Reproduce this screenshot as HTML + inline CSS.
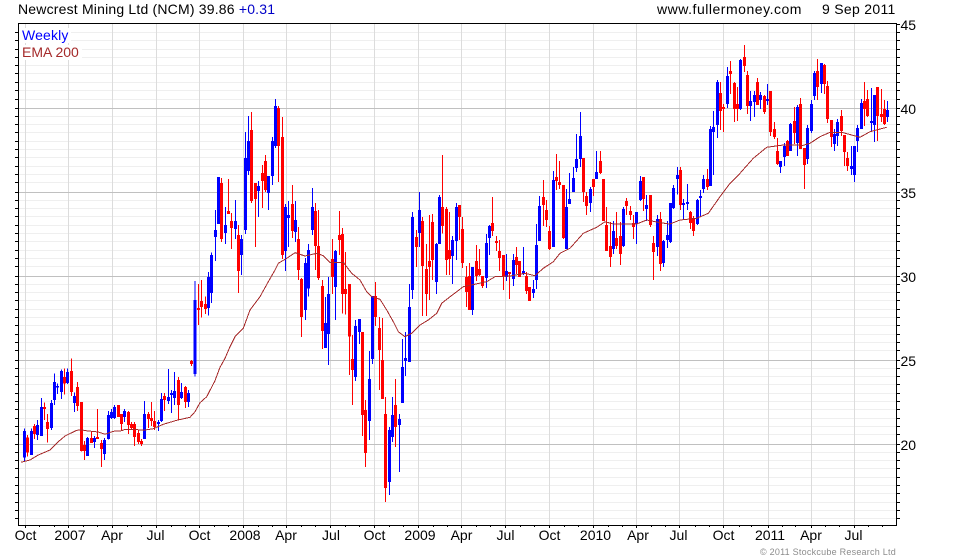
<!DOCTYPE html>
<html><head><meta charset="utf-8"><title>Newcrest Mining Ltd (NCM)</title>
<style>
html,body{margin:0;padding:0;background:#fff}
svg{display:block}
text{font-family:"Liberation Sans",Arial,sans-serif;font-size:14px;fill:#000}
.w,.t{fill:none}
.l{stroke-width:3;fill:none;shape-rendering:crispEdges}
.f{stroke-width:9;fill:none;shape-rendering:crispEdges}
.B{stroke:#0000ff}.R{stroke:#ff0000}
</style></head><body>
<svg width="980" height="560" viewBox="0 0 980 560" xmlns="http://www.w3.org/2000/svg">
<rect width="980" height="560" fill="#fff"/>
<g shape-rendering="crispEdges" fill="none">
<path stroke="#efefef" d="M18 32.5H897M18 40.5H897M18 49.5H897M18 57.5H897M18 65.5H897M18 73.5H897M18 82.5H897M18 90.5H897M18 99.5H897M18 116.5H897M18 124.5H897M18 132.5H897M18 141.5H897M18 149.5H897M18 157.5H897M18 166.5H897M18 174.5H897M18 182.5H897M18 200.5H897M18 208.5H897M18 216.5H897M18 225.5H897M18 233.5H897M18 241.5H897M18 250.5H897M18 258.5H897M18 266.5H897M18 284.5H897M18 292.5H897M18 300.5H897M18 309.5H897M18 317.5H897M18 325.5H897M18 334.5H897M18 342.5H897M18 350.5H897M18 368.5H897M18 376.5H897M18 384.5H897M18 393.5H897M18 401.5H897M18 409.5H897M18 418.5H897M18 426.5H897M18 434.5H897M18 452.5H897M18 460.5H897M18 468.5H897M18 477.5H897M18 485.5H897M18 493.5H897M18 502.5H897M18 510.5H897M18 518.5H897"/>
<path stroke="#dcdcdc" d="M25.5 24V525M68.5 24V525M112.5 24V525M156.5 24V525M199.5 24V525M243.5 24V525M286.5 24V525M330.5 24V525M374.5 24V525M418.5 24V525M461.5 24V525M505.5 24V525M549.5 24V525M593.5 24V525M636.5 24V525M679.5 24V525M723.5 24V525M768.5 24V525M811.5 24V525M854.5 24V525"/>
<path stroke="#c0c0c0" d="M18 108.5H897M18 192.5H897M18 276.5H897M18 360.5H897M18 444.5H897"/>
</g>
<rect x="19" y="28" width="52" height="15" fill="#fff"/>
<rect x="19" y="45" width="63" height="15" fill="#fff"/>

<!-- Segment A -->
<g transform="translate(0,360) scale(.33333)">
<path class="l B" d="M73 205V305M94 205V285M112 180V240M124 114V228M154 120V210M163 40V135M172 70V102M184 28V117M202 25V72M223 98V156M262 231V288M283 228V264M313 234V300M325 153V238M334 147V177M343 135V177M373 147V186M433 123V237M475 180V213M484 99V186M505 27V132M514 90V159M523 36V135M544 69V117M565 90V141"/>
<path class="f B" d="M73 213V293M94 213V285M112 195V225M124 141V228M154 129V204M163 66V120M172 78V83M184 33V96M202 36V69M223 108V129M262 234V288M283 234V246M313 240V282M325 165V237M334 156V174M343 141V174M373 153V171M433 162V237M475 186V192M484 117V183M505 111V123M514 99V105M523 93V114M544 96V114M565 99V126"/>
<path class="l R" d="M82 225V290M103 192V237M133 128V180M142 162V248M193 25V104M214 -5V108M232 66V153M244 126V275M253 243V300M274 213V249M292 147V237M304 240V321M355 135V171M364 162V210M385 153V222M394 186V207M403 186V258M415 210V252M424 237V258M445 156V204M454 126V198M463 153V210M493 99V153M535 51V180M556 78V144M574 0V18"/>
<path class="f R" d="M82 232V278M103 198V222M133 141V147M142 186V207M193 51V71M214 33V96M232 81V138M244 126V273M253 255V273M274 234V249M292 231V237M304 249V267M355 135V171M364 162V192M385 156V195M394 192V204M403 192V231M415 219V246M424 243V252M445 162V177M454 174V183M463 183V201M493 108V120M535 60V135M556 81V126M574 3V12"/>
</g>

<!-- Segment B -->
<g transform="translate(180,90) scale(.33333)">
<path class="l B" d="M45 573V860M85 546V677M94 487V639M106 360V513M115 261V402M136 351V462M166 330V447M184 435V555M196 126V432M205 78V255M235 273V381M265 258V360M277 141V285M286 27V174M316 342V543M325 333V471M346 333V456M376 504V690M385 462V620M397 294V435M436 621V774M445 561V825M466 480V690"/>
<path class="f B" d="M45 630V852M85 561V654M94 495V609M106 420V441M115 261V402M136 405V429M166 393V417M184 447V495M196 204V420M205 153V243M235 288V303M265 258V309M277 153V258M286 48V168M316 351V483M325 375V384M346 390V426M376 519V660M385 480V595M397 351V420M436 699V774M445 612V732M466 483V591"/>
<path class="l R" d="M55 582V705M64 570V683M76 620V672M124 264V456M145 267V372M154 369V477M175 405V609M214 66V339M226 279V471M247 225V354M256 195V306M295 48V276M307 81V507M337 285V444M355 411V570M364 564V741M406 339V540M415 360V570M427 570V777M457 447V612M478 363V495M487 414V670M496 486V673M508 582V855"/>
<path class="f R" d="M55 654V660M64 633V651M76 642V657M124 279V447M145 363V372M154 393V414M175 435V543M214 120V333M226 279V327M247 249V273M256 213V300M295 54V168M307 141V495M337 342V423M355 447V540M364 567V681M406 363V468M415 468V564M427 588V723M457 507V561M478 435V450M487 432V612M496 597V612M508 582V740"/>
</g>

<!-- Segment C -->
<g transform="translate(330,280) scale(.33333)">
<path class="l B" d="M76 120V303M88 117V192M118 213V480M127 48V252M178 441V645M187 351V486M208 402V576M217 177V369M226 156V288M238 12V246M247 -204V57M268 -264V-99M319 -111V42M328 -255V-108"/>
<path class="f B" d="M76 138V291M88 117V156M118 297V423M127 48V237M178 450V606M187 405V471M208 417V435M217 261V369M226 234V243M238 81V246M247 -189V30M268 -210V-141M319 -108V6M328 -249V-108"/>
<path class="l R" d="M67 165V375M97 156V468M106 360V561M136 6V138M148 111V330M157 114V357M166 351V666M196 297V501M259 -150V-39M277 -189V108M289 -108V108M298 -195V60M307 -198V0"/>
<path class="f R" d="M67 237V270M97 156V405M106 390V519M136 48V111M148 144V210M157 240V357M166 402V624M196 375V441M259 -129V-99M277 -177V-42M289 -33V42M298 -57V-39M307 -174V-60"/>
</g>

<!-- Segment D -->
<g transform="translate(440,100) scale(.33333)">
<path class="l B" d="M37 408V552M49 309V480M97 501V645M139 402V564M148 375V465M199 462V543M220 462V558M250 441V525M280 540V594M289 372V567M298 288V423M340 213V441M379 267V447M388 219V312M400 201V276M409 102V216M421 36V201M451 261V336M469 153V237M520 363V462M550 321V441M589 336V432M601 228V303M619 285V363M652 345V468M670 420V501M682 363V444M691 309V429M700 255V327"/>
<path class="f B" d="M37 420V468M49 321V423M97 501V630M139 429V534M148 378V414M199 513V531M220 480V537M250 513V522M280 567V579M289 435V540M298 318V423M340 240V441M379 321V447M388 297V312M400 234V276M409 177V204M421 108V177M451 267V309M469 216V237M520 393V447M550 327V438M589 336V372M601 243V300M619 315V327M652 357V441M670 423V489M682 405V420M691 309V426M700 264V324"/>
<path class="l R" d="M7 165V400M19 321V525M28 336V525M58 315V420M67 351V504M79 498V621M88 489V630M109 435V543M118 447V528M127 528V564M157 291V408M169 408V453M178 420V513M190 465V570M208 516V597M229 441V522M238 483V531M259 516V582M268 561V603M310 240V378M319 300V381M328 378V450M349 162V270M358 183V267M370 255V417M430 174V306M439 276V345M460 237V288M481 153V222M490 237V363M499 321V453M511 366V501M529 336V447M541 366V495M559 294V345M571 318V360M580 345V417M610 231V333M631 285V381M640 408V540M661 336V513"/>
<path class="f R" d="M7 321V378M19 327V480M28 450V477M58 315V351M67 387V489M79 531V576M88 528V630M109 483V528M118 507V525M127 528V558M157 369V393M169 423V429M178 453V474M190 465V528M208 516V522M229 471V495M238 483V531M259 528V573M268 561V603M310 291V315M319 330V360M328 393V447M349 231V243M358 246V255M370 255V414M430 174V276M439 288V318M460 237V261M481 183V219M490 237V363M499 375V453M511 438V471M529 414V438M541 408V462M559 303V318M571 333V345M580 369V381M610 231V297M631 285V375M640 429V456M661 357V492"/>
</g>

<!-- Segment E -->
<g transform="translate(670,40) scale(.33333)">
<path class="l B" d="M22 381V464M40 477V537M52 432V510M82 477V555M91 450V531M100 405V459M121 258V438M130 213V405M142 120V294M172 81V204M211 57V210M241 153V243M253 153V231M271 156V207M292 132V195M331 363V399M343 309V378M361 249V333M382 195V348M412 255V372M424 180V279M433 93V180M454 69V159M493 267V333M502 237V318M544 318V405M553 318V426M562 255V336M574 177V267M604 144V276M613 165V306M652 183V246"/>
<path class="f B" d="M22 405V417M40 489V495M52 486V492M82 480V552M91 468V474M100 417V447M121 267V438M130 261V276M142 126V255M172 108V192M211 60V207M241 183V198M253 165V186M271 165V180M292 177V183M331 363V381M343 318V351M361 252V333M382 201V309M412 264V357M424 192V273M433 99V168M454 69V132M493 282V312M502 246V288M544 378V387M553 318V405M562 264V303M574 189V267M604 243V249M613 165V255M652 210V231"/>
<path class="l R" d="M31 381V510M61 513V567M70 528V588M112 387V450M151 126V270M160 192V276M181 63V162M193 126V246M202 141V243M223 15V96M232 93V222M262 114V195M283 165V222M301 153V288M313 246V297M322 294V375M352 300V348M373 201V312M391 174V327M403 324V447M442 57V180M463 72V162M472 123V249M484 240V321M514 210V288M523 285V378M532 336V393M583 126V258M592 150V231M622 141V303M634 147V246M643 180V255"/>
<path class="f R" d="M31 390V495M61 516V549M70 534V573M112 417V441M151 159V213M160 201V207M181 93V102M193 129V207M202 192V207M223 51V78M232 105V198M262 126V195M283 168V216M301 153V276M313 267V291M322 333V372M352 303V348M373 243V279M391 192V327M403 324V375M442 93V141M463 75V132M472 138V237M484 240V291M514 228V273M523 285V336M532 354V378M583 183V207M592 177V228M622 141V228M634 222V231M643 207V252"/>
</g>

<!-- EMA -->
<polyline fill="none" stroke="#a52a2a" stroke-width="1" shape-rendering="crispEdges" points="21,462.3 30,460 38.3,455 50,450 58.3,441.7 65,436 76.7,430.3 81.7,430 88.3,431 98.3,432 105,434.3 113.3,431.3 121.7,430.7 125,429.3 133.3,429.3 143.3,430.3 153.3,428.7 163.3,424.3 176.7,420.3 190,417.3 195,411.7 200,402.7 206.7,396.7 215,380.7 220,367.3 225,358.3 230,346.7 235,336.7 243.3,328.3 250,310 260,296.7 268.3,281.7 275,270 278.3,263.3 286.7,258.3 295,252.7 305,256 316.7,253.3 323.3,255.7 330,262.7 343.3,262.3 351.7,273.3 360,280 366.7,291.7 371.7,296.7 380,299.3 386.7,310 393.3,321.7 398.3,331.7 405,336.7 411.7,333.3 420,325 428.3,320 436.7,313.3 441.7,303.3 449.3,297.3 463.3,286.7 486.7,281.7 495,276.7 510,276 525,273.3 535,275.7 543.3,268.3 553.3,261.7 560,253.3 570,248.3 583.3,233.3 596.7,227.3 605,221.7 613.3,224 636.7,224 646.7,220 660,222.7 670,224 680,220 696.7,218.3 708.3,213.3 720,196.7 730,183.3 740,173.3 753.3,158.3 766.7,147.3 783.3,145 803.3,145.3 810,143.3 820,136.7 830,132.3 843.3,132.7 860,137.3 870,131.7 886.7,127.3"/>

<!-- Axes -->
<g shape-rendering="crispEdges" fill="none" stroke="#000">
<rect x="18.5" y="23.5" width="878" height="502"/>
<path d="M15 32.5h3M15 40.5h3M15 49.5h3M15 57.5h3M15 65.5h3M15 73.5h3M15 82.5h3M15 90.5h3M15 99.5h3M15 108.5h3M15 116.5h3M15 124.5h3M15 132.5h3M15 141.5h3M15 149.5h3M15 157.5h3M15 166.5h3M15 174.5h3M15 182.5h3M15 192.5h3M15 200.5h3M15 208.5h3M15 216.5h3M15 225.5h3M15 233.5h3M15 241.5h3M15 250.5h3M15 258.5h3M15 266.5h3M15 276.5h3M15 284.5h3M15 292.5h3M15 300.5h3M15 309.5h3M15 317.5h3M15 325.5h3M15 334.5h3M15 342.5h3M15 350.5h3M15 360.5h3M15 368.5h3M15 376.5h3M15 384.5h3M15 393.5h3M15 401.5h3M15 409.5h3M15 418.5h3M15 426.5h3M15 434.5h3M15 444.5h3M15 452.5h3M15 460.5h3M15 468.5h3M15 477.5h3M15 485.5h3M15 493.5h3M15 502.5h3M15 510.5h3M15 518.5h3"/>
<path d="M897 24.5h3M897 32.5h3M897 40.5h3M897 49.5h3M897 57.5h3M897 65.5h3M897 73.5h3M897 82.5h3M897 90.5h3M897 99.5h3M897 108.5h3M897 116.5h3M897 124.5h3M897 132.5h3M897 141.5h3M897 149.5h3M897 157.5h3M897 166.5h3M897 174.5h3M897 182.5h3M897 192.5h3M897 200.5h3M897 208.5h3M897 216.5h3M897 225.5h3M897 233.5h3M897 241.5h3M897 250.5h3M897 258.5h3M897 266.5h3M897 276.5h3M897 284.5h3M897 292.5h3M897 300.5h3M897 309.5h3M897 317.5h3M897 325.5h3M897 334.5h3M897 342.5h3M897 350.5h3M897 360.5h3M897 368.5h3M897 376.5h3M897 384.5h3M897 393.5h3M897 401.5h3M897 409.5h3M897 418.5h3M897 426.5h3M897 434.5h3M897 444.5h3M897 452.5h3M897 460.5h3M897 468.5h3M897 477.5h3M897 485.5h3M897 493.5h3M897 502.5h3M897 510.5h3M897 518.5h3"/>
<path d="M25.5 525v3M68.5 525v3M112.5 525v3M156.5 525v3M199.5 525v3M243.5 525v3M286.5 525v3M330.5 525v3M374.5 525v3M418.5 525v3M461.5 525v3M505.5 525v3M549.5 525v3M593.5 525v3M636.5 525v3M679.5 525v3M723.5 525v3M768.5 525v3M811.5 525v3M854.5 525v3"/>
<path d="M39.5 525v2M54.5 525v2M83.5 525v2M97.5 525v2M127.5 525v2M141.5 525v2M171.5 525v2M185.5 525v2M214.5 525v2M228.5 525v2M258.5 525v2M272.5 525v2M301.5 525v2M315.5 525v2M345.5 525v2M359.5 525v2M389.5 525v2M403.5 525v2M433.5 525v2M447.5 525v2M476.5 525v2M490.5 525v2M520.5 525v2M534.5 525v2M564.5 525v2M578.5 525v2M608.5 525v2M622.5 525v2M651.5 525v2M665.5 525v2M695.5 525v2M709.5 525v2M739.5 525v2M751.5 525v2M782.5 525v2M795.5 525v2M825.5 525v2M839.5 525v2M868.5 525v2M882.5 525v2"/>
</g>

<!-- Text -->
<text x="18" y="14" style="letter-spacing:.19px">Newcrest Mining Ltd (NCM) 39.86 <tspan style="fill:#0000c8">+0.31</tspan></text>
<text x="657" y="14" style="letter-spacing:.52px">www.fullermoney.com</text>
<text x="822" y="14" style="letter-spacing:.3px">9 Sep 2011</text>
<text x="22" y="40" style="fill:#0000ff;letter-spacing:.15px">Weekly</text>
<text x="22" y="57" style="fill:#a52a2a">EMA 200</text>
<text x="900.5" y="30">45</text>
<text x="900.5" y="114">40</text>
<text x="900.5" y="198">35</text>
<text x="900.5" y="282">30</text>
<text x="900.5" y="366">25</text>
<text x="900.5" y="450">20</text>
<g text-anchor="middle">
<text x="25.5" y="540">Oct</text><text x="70" y="540">2007</text><text x="112" y="540">Apr</text><text x="155.5" y="540">Jul</text><text x="199.5" y="540">Oct</text><text x="245" y="540">2008</text><text x="286" y="540">Apr</text><text x="331" y="540">Jul</text><text x="374.5" y="540">Oct</text><text x="420" y="540">2009</text><text x="461.5" y="540">Apr</text><text x="505.5" y="540">Jul</text><text x="549.5" y="540">Oct</text><text x="595.5" y="540">2010</text><text x="638" y="540">Apr</text><text x="678.5" y="540">Jul</text><text x="723.5" y="540">Oct</text><text x="770" y="540">2011</text><text x="811" y="540">Apr</text><text x="853.5" y="540">Jul</text>
</g>
<text x="760" y="555" style="font-size:9px;fill:#8c8c8c;letter-spacing:.24px">© 2011 Stockcube Research Ltd</text>
</svg>
</body></html>
